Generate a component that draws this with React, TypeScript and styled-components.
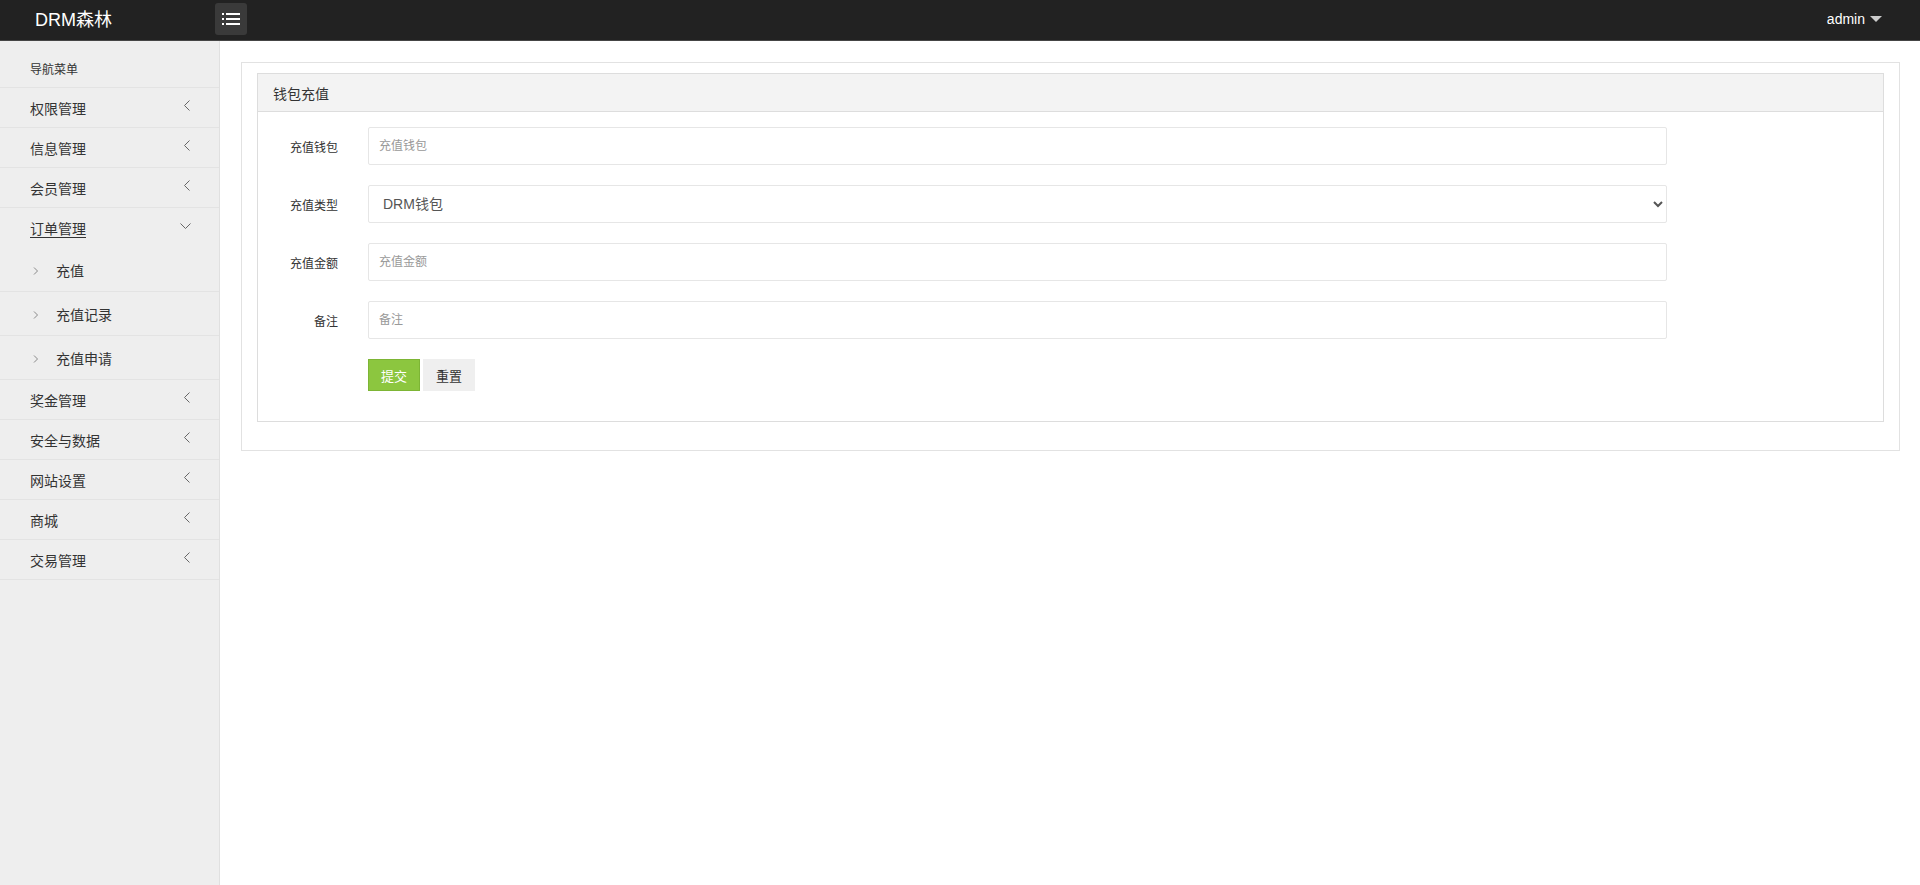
import React from 'react'
import styled, { createGlobalStyle } from 'styled-components'

const GlobalStyle = createGlobalStyle`
  html, body {
    margin: 0;
    padding: 0;
    background: #fff;
    font-family: "Liberation Sans", "Noto Sans CJK SC", sans-serif;
    color: #333;
  }
  * { box-sizing: border-box; }
`

const Page = styled.div`
  display: flex;
  flex-direction: column;
  height: 100vh;
  overflow: hidden;
`

const TopBar = styled.header`
  flex: none;
  height: 41px;
  background: #222;
  border-bottom: 1px solid #454545;
  display: flex;
  align-items: center;
`

const Brand = styled.div`
  width: 215px;
  padding-left: 35px;
  font-size: 18px;
  line-height: 34px;
  color: #fff;
  margin-top: -1px;
`

const ToggleButton = styled.button`
  width: 32px;
  height: 32px;
  margin-top: -2px;
  border: none;
  border-radius: 3px;
  background: #3a3a3a;
  display: flex;
  align-items: center;
  justify-content: center;
  padding: 0;
`

const UserMenu = styled.div`
  margin-left: auto;
  margin-right: 38px;
  margin-top: -2px;
  display: flex;
  align-items: center;
  gap: 5px;
  font-size: 14px;
  color: #fff;
`

const Caret = styled.span`
  width: 0;
  height: 0;
  border-left: 6px solid transparent;
  border-right: 6px solid transparent;
  border-top: 6px solid #ccc;
`

const Body = styled.div`
  flex: 1;
  display: flex;
  min-height: 0;
`

const Sidebar = styled.nav`
  width: 220px;
  flex: none;
  background: #eee;
  border-right: 1px solid #e0e0e0;
`

const NavHeading = styled.div`
  height: 47px;
  padding: 0 0 11px 30px;
  display: flex;
  align-items: flex-end;
  font-size: 12px;
  line-height: 12px;
  color: #333;
  border-bottom: 1px solid #e3e3e3;
`

const NavItem = styled.div<{ $open?: boolean }>`
  height: 40px;
  padding: 0 28px 0 30px;
  display: flex;
  align-items: center;
  justify-content: space-between;
  font-size: 14px;
  color: #333;
  border-bottom: ${p => (p.$open ? 'none' : '1px solid #e3e3e3')};
`

const NavLabel = styled.span<{ $active?: boolean }>`
  text-decoration: ${p => (p.$active ? 'underline' : 'none')};
  text-underline-offset: 3px;
`

const Chevron = styled.span`
  display: flex;
  margin-top: -4px;
`

const SubItem = styled.div`
  height: 44px;
  padding-left: 33px;
  display: flex;
  align-items: center;
  gap: 17px;
  font-size: 14px;
  color: #333;
  border-bottom: 1px solid #e3e3e3;
`

const Main = styled.main`
  flex: 1;
  padding: 21px 20px 0 21px;
`

const OuterBox = styled.div`
  border: 1px solid #e2e2e2;
  padding: 10px 15px 28px;
`

const Panel = styled.section`
  border: 1px solid #ddd;
`

const PanelHead = styled.div`
  height: 38px;
  background: #f3f3f3;
  border-bottom: 1px solid #ddd;
  padding-left: 15px;
  display: flex;
  align-items: center;
  font-size: 14px;
  color: #333;
`

const PanelBody = styled.div`
  padding: 15px 0 30px;
  display: grid;
  grid-template-columns: 80px 1299px;
  column-gap: 30px;
  row-gap: 20px;
  align-items: center;
`

const Label = styled.label`
  text-align: right;
  font-size: 12px;
  color: #333;
`

const TextInput = styled.input`
  height: 38px;
  width: 100%;
  border: 1px solid #e6e6e6;
  border-radius: 2px;
  padding: 0 10px;
  font-family: inherit;
  font-size: 12px;
  color: #555;
  outline: none;
  &::placeholder { color: #999; }
`

const Select = styled.select`
  height: 38px;
  width: 100%;
  border: 1px solid #e6e6e6;
  border-radius: 2px;
  padding: 0 8px 0 10px;
  font-family: inherit;
  font-size: 14px;
  color: #555;
  background: #fff;
  outline: none;
`

const Actions = styled.div`
  grid-column: 2;
  display: flex;
  gap: 3px;
`

const Button = styled.button<{ $primary?: boolean }>`
  width: 52px;
  height: 32px;
  border: 1px solid ${p => (p.$primary ? '#7db535' : '#efefef')};
  background: ${p => (p.$primary ? '#8cc63f' : '#efefef')};
  color: ${p => (p.$primary ? '#fff' : '#333')};
  font-family: inherit;
  font-size: 13px;
  padding: 0;
`

const ListIcon = () => (
  <svg width="18" height="12" viewBox="0 0 18 12">
    <g fill="#fff">
      <rect x="0" y="0" width="2" height="2" />
      <rect x="4" y="0" width="14" height="2" />
      <rect x="0" y="5" width="2" height="2" />
      <rect x="4" y="5" width="14" height="2" />
      <rect x="0" y="10" width="2" height="2" />
      <rect x="4" y="10" width="14" height="2" />
    </g>
  </svg>
)

const LeftChevron = () => (
  <svg width="8" height="11" viewBox="0 0 8 11">
    <path d="M6.5 0.5 L1.5 5.5 L6.5 10.5" fill="none" stroke="#666" strokeWidth="1" />
  </svg>
)

const DownChevron = () => (
  <svg width="11" height="7" viewBox="0 0 11 7">
    <path d="M0.5 0.5 L5.5 5.5 L10.5 0.5" fill="none" stroke="#666" strokeWidth="1" />
  </svg>
)

const SmallArrow = () => (
  <svg width="6" height="8" viewBox="0 0 6 8" style={{ marginTop: 2 }}>
    <path d="M1 0.5 L4.5 4 L1 7.5" fill="none" stroke="#888" strokeWidth="1" />
  </svg>
)

const before = ['权限管理', '信息管理', '会员管理']
const after = ['奖金管理', '安全与数据', '网站设置', '商城', '交易管理']
const subs = ['充值', '充值记录', '充值申请']

export default function App() {
  return (
    <Page>
      <GlobalStyle />
      <TopBar>
        <Brand>DRM森林</Brand>
        <ToggleButton>
          <ListIcon />
        </ToggleButton>
        <UserMenu>
          admin <Caret />
        </UserMenu>
      </TopBar>
      <Body>
        <Sidebar>
          <NavHeading>导航菜单</NavHeading>
          {before.map(t => (
            <NavItem key={t}>
              <NavLabel>{t}</NavLabel>
              <Chevron><LeftChevron /></Chevron>
            </NavItem>
          ))}
          <NavItem $open>
            <NavLabel $active>订单管理</NavLabel>
            <Chevron><DownChevron /></Chevron>
          </NavItem>
          {subs.map(t => (
            <SubItem key={t}>
              <SmallArrow />
              {t}
            </SubItem>
          ))}
          {after.map(t => (
            <NavItem key={t}>
              <NavLabel>{t}</NavLabel>
              <Chevron><LeftChevron /></Chevron>
            </NavItem>
          ))}
        </Sidebar>
        <Main>
          <OuterBox>
            <Panel>
              <PanelHead>钱包充值</PanelHead>
              <PanelBody>
                <Label>充值钱包</Label>
                <TextInput placeholder="充值钱包" />
                <Label>充值类型</Label>
                <Select defaultValue="drm">
                  <option value="drm">DRM钱包</option>
                </Select>
                <Label>充值金额</Label>
                <TextInput placeholder="充值金额" />
                <Label>备注</Label>
                <TextInput placeholder="备注" />
                <Actions>
                  <Button $primary>提交</Button>
                  <Button>重置</Button>
                </Actions>
              </PanelBody>
            </Panel>
          </OuterBox>
        </Main>
      </Body>
    </Page>
  )
}
